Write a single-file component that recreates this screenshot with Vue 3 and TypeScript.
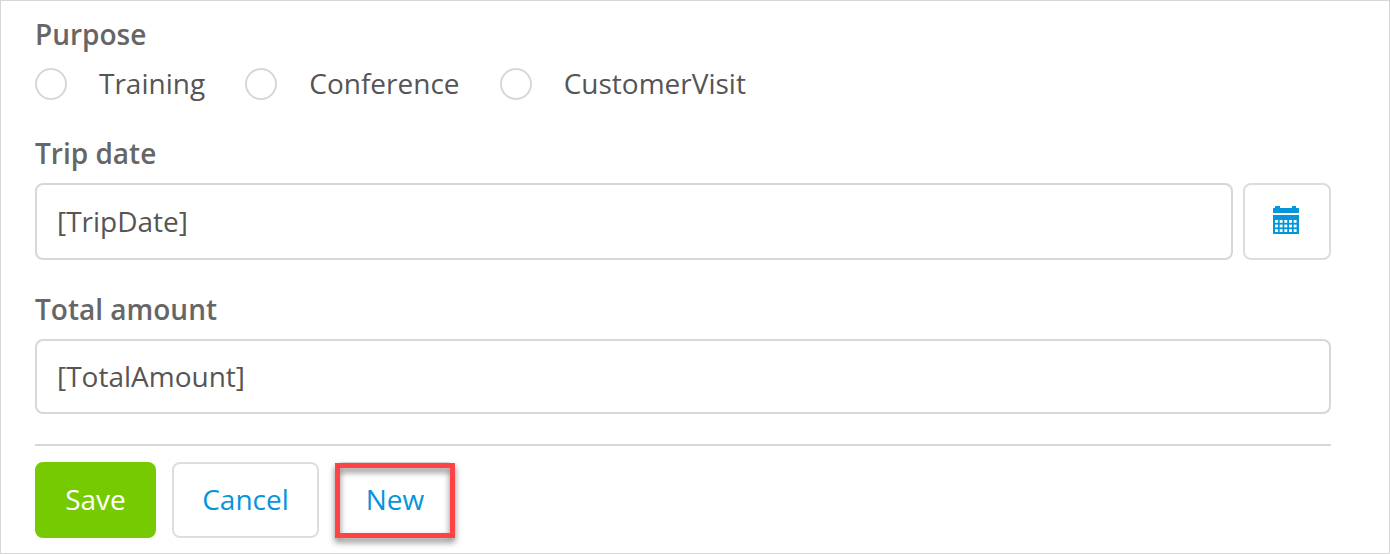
<script setup lang="ts">
import { ref } from 'vue'

const purposes: string[] = ['Training', 'Conference', 'CustomerVisit']
const selected = ref<string>('')
const columns: number[] = [0, 1, 2, 3, 4]
const rows: number[] = [0, 1, 2]
</script>

<template>
  <form class="form" @submit.prevent>
    <div class="label purpose-label">Purpose</div>
    <div class="radios">
      <label v-for="purpose in purposes" :key="purpose" class="option">
        <input v-model="selected" class="radio" type="radio" name="purpose" :value="purpose" />
        <span class="option-text">{{ purpose }}</span>
      </label>
    </div>

    <div class="label date-label">Trip date</div>
    <div class="date-row">
      <div class="field date-field">[TripDate]</div>
      <button class="calendar" type="button" aria-label="Pick a date">
        <svg width="26" height="28" viewBox="0 0 26 28">
          <path
            fill="#0595db"
            d="M0 2.6q0-.6.6-.6H2V.5q0-.5.5-.5h4q.5 0 .5.5V2h12V.5q0-.5.5-.5h3q.5 0 .5.5V2h2.400q.6 0 .6.6V7H0zM0 9h26v18.400q0 .6-.6.6H.6q-.6 0-.6-.6z"
          />
          <template v-for="r in rows" :key="r">
            <rect
              v-for="c in columns"
              :key="c"
              :x="2 + c * 4.67"
              :y="14 + r * 4.6"
              width="2.9"
              height="2.8"
              fill="#fff"
            />
          </template>
        </svg>
      </button>
    </div>

    <div class="label amount-label">Total amount</div>
    <div class="field amount-field">[TotalAmount]</div>

    <div class="actions">
      <button class="btn save" type="button">Save</button>
      <button class="btn cancel" type="button">Cancel</button>
      <button class="btn new" type="button">New<span class="highlight"></span></button>
    </div>
  </form>
</template>

<style>
body {
  margin: 0;
  background: #fff;
}
</style>

<style scoped>
.form {
  box-sizing: border-box;
  width: 1390px;
  height: 554px;
  padding: 14px 58px 0 34px;
  border: 1px solid #d7d7d7;
  background: #fff;
  color: #555;
  font-family: 'Open Sans', 'Noto Sans', sans-serif;
  font-size: 28px;
  line-height: 38px;
  overflow: hidden;
}
.label {
  height: 38px;
  color: #666;
  font-weight: 600;
}
.radios {
  display: flex;
  height: 38px;
  margin-top: 12px;
  gap: 40.15px;
}
.option {
  display: flex;
  align-items: center;
  gap: 32px;
}
.option-text {
  padding-bottom: 2px;
}
.radio {
  appearance: none;
  box-sizing: border-box;
  width: 32px;
  height: 32px;
  margin: 0;
  border: 2px solid #d7d7d7;
  border-radius: 50%;
  background: #fff;
}
.date-label {
  margin-top: 31px;
}
.date-row {
  display: flex;
  height: 77px;
  margin-top: 11px;
  gap: 10px;
}
.field {
  box-sizing: border-box;
  display: flex;
  align-items: center;
  padding: 0 20px 2px;
  border: 2px solid #d7d7d7;
  border-radius: 8px;
  background: #fff;
}
.date-field {
  flex: 1;
}
.calendar {
  box-sizing: border-box;
  width: 88px;
  padding: 0 2px 3px 0;
  border: 2px solid #ddd;
  border-radius: 8px;
  background: #fff;
  display: flex;
  align-items: center;
  justify-content: center;
}
.amount-label {
  margin-top: 30px;
}
.amount-field {
  height: 75px;
  margin-top: 11px;
}
.actions {
  display: flex;
  gap: 16px;
  margin-top: 30px;
  padding-top: 16px;
  border-top: 2px solid #d7d7d7;
}
.btn {
  box-sizing: border-box;
  position: relative;
  height: 76px;
  padding: 0 0 2px;
  border: 2px solid #ddd;
  border-radius: 8px;
  background: #fff;
  color: #0595db;
  font: inherit;
}
.save {
  width: 121px;
  border-color: #76ca02;
  background: #76ca02;
  color: #fff;
}
.cancel {
  width: 147px;
}
.new {
  width: 120px;
}
.highlight {
  position: absolute;
  inset: -1px -2px -2px;
  border: 5px solid #ff4344;
  filter: drop-shadow(0 4px 3px rgba(0, 0, 0, 0.5));
}
</style>
